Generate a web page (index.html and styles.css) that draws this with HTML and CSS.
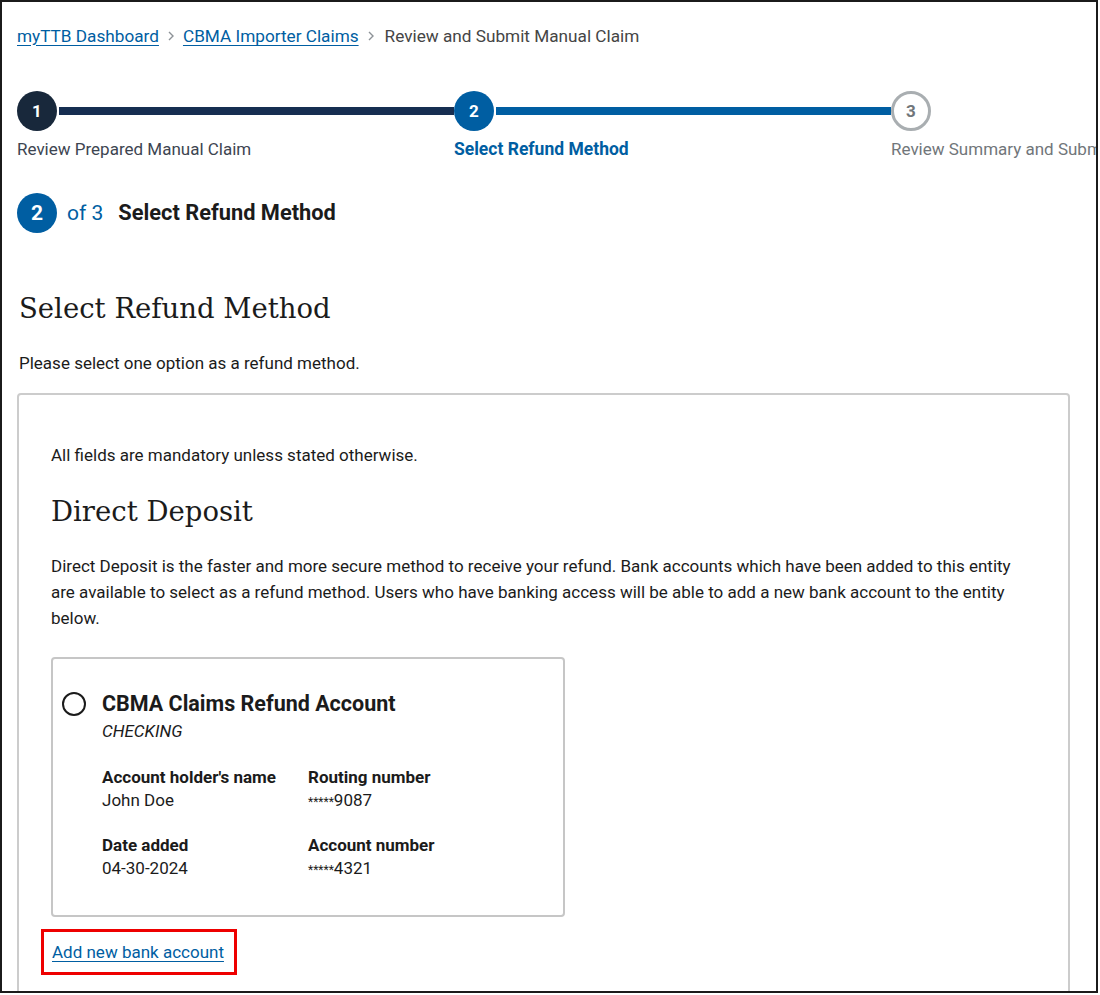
FILE: index.html
```html
<!DOCTYPE html>
<html lang="en">
<head>
<meta charset="utf-8">
<title>Review and Submit Manual Claim</title>
<link rel="stylesheet" href="styles.css">
</head>
<body>
<div class="frame">
  <nav class="breadcrumb" aria-label="Breadcrumbs">
    <a href="#" class="crumb-link">myTTB Dashboard</a>
    <svg class="chev" viewBox="0 0 6 10" width="6" height="10" aria-hidden="true"><path d="M1 1l4 4-4 4" fill="none" stroke="#8d9297" stroke-width="1.4"/></svg>
    <a href="#" class="crumb-link">CBMA Importer Claims</a>
    <svg class="chev" viewBox="0 0 6 10" width="6" height="10" aria-hidden="true"><path d="M1 1l4 4-4 4" fill="none" stroke="#8d9297" stroke-width="1.4"/></svg>
    <span class="crumb-current">Review and Submit Manual Claim</span>
  </nav>

  <ol class="stepper">
    <li class="step complete">
      <div class="track"><span class="num">1</span><span class="line"></span></div>
      <span class="label">Review Prepared Manual Claim</span>
    </li>
    <li class="step current">
      <div class="track"><span class="num">2</span><span class="line"></span></div>
      <span class="label">Select Refund Method</span>
    </li>
    <li class="step upcoming">
      <div class="track"><span class="num">3</span></div>
      <span class="label">Review Summary and Submit</span>
    </li>
  </ol>

  <div class="step-heading">
    <span class="sh-num">2</span>
    <span class="sh-of">of 3</span>
    <span class="sh-title">Select Refund Method</span>
  </div>

  <main class="content">
    <h1 class="page-title">Select Refund Method</h1>
    <p class="intro">Please select one option as a refund method.</p>

    <section class="panel">
      <p class="mandatory">All fields are mandatory unless stated otherwise.</p>
      <h2 class="section-title">Direct Deposit</h2>
      <p class="desc">Direct Deposit is the faster and more secure method to receive your refund. Bank accounts which have been added to this entity are available to select as a refund method. Users who have banking access will be able to add a new bank account to the entity below.</p>

      <div class="account-card">
        <span class="radio" aria-hidden="true"></span>
        <div class="account-body">
          <div class="account-name">CBMA Claims Refund Account</div>
          <div class="account-type">CHECKING</div>
          <dl class="account-grid">
            <div class="field"><dt>Account holder's name</dt><dd>John Doe</dd></div>
            <div class="field"><dt>Routing number</dt><dd><span class="mask">*****</span>9087</dd></div>
            <div class="field"><dt>Date added</dt><dd>04-30-2024</dd></div>
            <div class="field"><dt>Account number</dt><dd><span class="mask">*****</span>4321</dd></div>
          </dl>
        </div>
      </div>

      <div class="highlight">
        <a href="#" class="add-link">Add new bank account</a>
      </div>
    </section>
  </main>
</div>
</body>
</html>
```

FILE: styles.css
```css
* { box-sizing: border-box; }

html, body {
  margin: 0;
  padding: 0;
  background: #ffffff;
}

body {
  font-family: Roboto, "Liberation Sans", Arial, sans-serif;
  color: #1b1b1b;
  font-size: 17px;
  line-height: 26px;
}

.frame {
  width: 1098px;
  height: 993px;
  border: 2px solid #1b1b1b;
  padding: 0 26px 0 15px;
  overflow: hidden;
}

/* Breadcrumb */
.breadcrumb {
  display: flex;
  align-items: center;
  gap: 7px;
  height: 24px;
  margin-top: 22px;
  font-size: 17.2px;
  line-height: 24px;
  white-space: nowrap;
}
.crumb-link {
  color: #005ea2;
  text-decoration: underline;
  text-underline-offset: 3px;
}
.crumb-current { color: #454545; margin-left: 2px; }
.chev { flex: 0 0 auto; margin: 0 2px; }

/* Stepper */
.stepper {
  list-style: none;
  margin: 43px 0 0 0;
  padding: 0;
  display: flex;
  white-space: nowrap;
}
.step {
  flex: 0 0 437px;
  display: flex;
  flex-direction: column;
}
.track {
  display: flex;
  align-items: center;
  height: 40px;
}
.num {
  flex: 0 0 40px;
  width: 40px;
  height: 40px;
  border-radius: 50%;
  display: flex;
  align-items: center;
  justify-content: center;
  font-weight: 700;
  font-size: 17px;
  color: #ffffff;
}
.line {
  flex: 1 1 auto;
  height: 8px;
  margin-left: 2px;
}
.complete .num { background: #18283b; }
.complete .line { background: #162e51; }
.current .num { background: #005ea2; }
.current .line { background: #005ea2; }
.upcoming .num {
  background: #ffffff;
  border: 3px solid #a9aeb1;
  color: #71767a;
}
.label {
  margin-top: 6px;
  font-size: 17px;
  line-height: 24px;
}
.complete .label { color: #3d4551; }
.current .label { color: #005ea2; font-weight: 700; font-size: 17.5px; }
.upcoming .label { color: #71767a; }

/* Step heading */
.step-heading {
  display: flex;
  align-items: center;
  margin-top: 32px;
  height: 40px;
}
.sh-num {
  width: 40px;
  height: 40px;
  border-radius: 50%;
  background: #005ea2;
  color: #ffffff;
  font-weight: 700;
  font-size: 21px;
  display: flex;
  align-items: center;
  justify-content: center;
}
.sh-of {
  margin-left: 10px;
  color: #005ea2;
  font-size: 21px;
}
.sh-title {
  margin-left: 15px;
  font-weight: 700;
  font-size: 21.8px;
}

/* Content */
.content { padding-left: 2px; }

.page-title {
  font-family: "DejaVu Serif", "Liberation Serif", serif;
  font-weight: 400;
  font-size: 27.5px;
  line-height: 40px;
  margin: 55px 0 0 0;
  color: #1b1b1b;
}
.intro {
  margin: 22px 0 0 0;
}

.panel {
  margin: 17px 0 0 -2px;
  border: 2px solid #cccccc;
  border-radius: 4px;
  padding: 47px 32px 40px 32px;
  min-height: 700px;
}
.mandatory { margin: 0; }
.section-title {
  font-family: "DejaVu Serif", "Liberation Serif", serif;
  font-weight: 400;
  font-size: 27.5px;
  line-height: 40px;
  margin: 23px 0 0 0;
}
.desc {
  margin: 22px 0 0 0;
  line-height: 26px;
}

.account-card {
  margin-top: 26px;
  width: 514px;
  border: 2px solid #c6c6c6;
  border-radius: 4px;
  padding: 31px 20px 33px 9px;
  display: flex;
  gap: 16px;
}
.radio {
  flex: 0 0 24px;
  width: 24px;
  height: 24px;
  border: 2px solid #1b1b1b;
  border-radius: 50%;
  margin-top: 2px;
}
.account-name {
  font-size: 21.5px;
  font-weight: 700;
  line-height: 28px;
}
.account-type {
  font-style: italic;
  line-height: 24px;
  margin-top: 1px;
}
.account-grid {
  margin: 23px 0 0 0;
  display: grid;
  grid-template-columns: 206px auto;
  row-gap: 20px;
}
.field dt { font-weight: 700; line-height: 23px; }
.field dd { margin: 0; line-height: 23px; }
.mask { font-size: 12px; }

.highlight {
  display: inline-block;
  margin: 12px 0 0 -10px;
  border: 3px solid #ee0000;
  padding: 7px 10px 7px 8px;
}
.add-link {
  color: #005ea2;
  text-decoration: underline;
  text-underline-offset: 3px;
}
```
